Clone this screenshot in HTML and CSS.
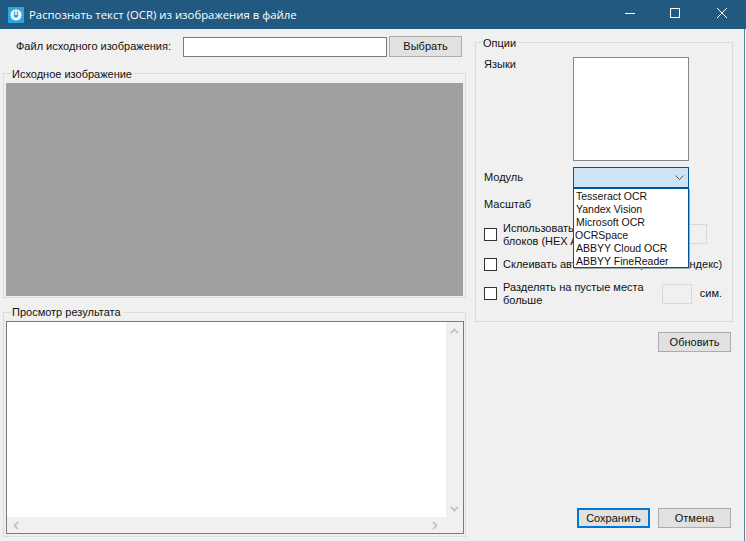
FILE: index.html
```html
<!DOCTYPE html>
<html lang="ru">
<head>
<meta charset="utf-8">
<title>Распознать текст (OCR) из изображения в файле</title>
<link rel="stylesheet" href="styles.css">
</head>
<body>
<div class="window">
  <header class="titlebar">
    <svg class="app-icon" width="16" height="16" viewBox="0 0 16 16">
      <rect width="16" height="16" fill="#2ba6df"/>
      <path d="M8 1.800l1.200 1.500 1.900-.6.500 1.800 1.800.5-.6 1.900L14.200 8l-1.400 1.100.6 1.900-1.800.5-.5 1.800-1.900-.6L8 14.200l-1.200-1.500-1.900.6-.5-1.800-1.800-.5.6-1.900L1.800 8l1.400-1.100-.6-1.900 1.800-.5.5-1.800 1.900.6z" fill="#fff"/>
      <circle cx="8" cy="8.400" r="3.300" fill="#2ba6df"/>
      <path d="M8 4v4.500" stroke="#2ba6df" stroke-width="3.400"/>
      <path d="M5.900 6a3.100 3.100 0 1 0 4.200 0" fill="none" stroke="#fff" stroke-width="1.300"/>
      <path d="M8 3.500v4.500" stroke="#fff" stroke-width="1.500"/>
    </svg>
    <span class="title">Распознать текст (OCR) из изображения в файле</span>
    <div class="win-controls">
      <svg class="win-btn" width="46" height="29" viewBox="0 0 46 29"><path d="M18 13.500h10" stroke="#fff"/></svg>
      <svg class="win-btn" width="46" height="29" viewBox="0 0 46 29"><rect x="17.500" y="8.500" width="9" height="9" fill="none" stroke="#fff"/></svg>
      <svg class="win-btn" width="46" height="29" viewBox="0 0 46 29"><path d="M18 8l10 10M28 8l-10 10" stroke="#fff"/></svg>
    </div>
  </header>
  <main class="content">
    <section class="left">
      <div class="file-row">
        <label class="file-label">Файл исходного изображения:</label>
        <div class="input file-input"></div>
        <button class="btn browse">Выбрать</button>
      </div>
      <div class="group source">
        <span class="legend">Исходное изображение</span>
        <div class="image-area"></div>
      </div>
      <div class="group preview">
        <span class="legend">Просмотр результата</span>
        <div class="result-box">
          <div class="result-main">
            <div class="result-text"></div>
            <div class="vscroll">
              <svg width="9" height="6" viewBox="0 0 9 6"><path d="M1 5l3.500-3.500L8 5" fill="none" stroke="#bdbdbd" stroke-width="1.600"/></svg>
              <svg width="9" height="6" viewBox="0 0 9 6"><path d="M1 1l3.500 3.500L8 1" fill="none" stroke="#bdbdbd" stroke-width="1.600"/></svg>
            </div>
          </div>
          <div class="hscroll">
            <svg width="6" height="9" viewBox="0 0 6 9"><path d="M5 1L1.500 4.500 5 8" fill="none" stroke="#bdbdbd" stroke-width="1.600"/></svg>
            <svg width="6" height="9" viewBox="0 0 6 9"><path d="M1 1l3.500 3.500L1 8" fill="none" stroke="#bdbdbd" stroke-width="1.600"/></svg>
          </div>
        </div>
      </div>
    </section>
    <section class="right">
      <div class="group options">
        <span class="legend">Опции</span>
        <div class="opt-row langs">
          <span class="opt-label">Языки</span>
          <div class="listbox"></div>
        </div>
        <div class="opt-row module">
          <span class="opt-label">Модуль</span>
          <div class="combo">
            <svg width="9" height="6" viewBox="0 0 9 6"><path d="M.5.500l4 4 4-4" fill="none" stroke="#555" stroke-width="1"/></svg>
            <ul class="dropdown">
              <li>Tesseract OCR</li>
              <li>Yandex Vision</li>
              <li>Microsoft OCR</li>
              <li class="nudge">OCRSpace</li>
              <li>ABBYY Cloud OCR</li>
              <li>ABBYY FineReader</li>
            </ul>
          </div>
        </div>
        <div class="opt-row scale">
          <span class="opt-label">Масштаб</span>
        </div>
        <div class="check-row first">
          <span class="checkbox"></span>
          <span class="check-text">Использовать цвет фона<br>блоков (HEX ARGB)</span>
          <div class="input disabled hex"></div>
        </div>
        <div class="check-row second">
          <span class="checkbox"></span>
          <span class="check-text">Склеивать автоматически (нижний индекс)</span>
        </div>
        <div class="check-row third">
          <span class="checkbox"></span>
          <span class="check-text">Разделять на пустые места<br>больше</span>
          <div class="input disabled spaces"></div>
          <span class="unit">сим.</span>
        </div>
      </div>
      <div class="update-row"><button class="btn">Обновить</button></div>
      <div class="footer-row">
        <button class="btn primary">Сохранить</button>
        <button class="btn">Отмена</button>
      </div>
    </section>
  </main>
</div>
</body>
</html>
```
FILE: styles.css
```css
* { box-sizing: border-box; }
html, body { margin: 0; height: 100%; }
body { background: #f0f0f0; font: 11px/13px "Liberation Sans", Arial, sans-serif; color: #111; overflow: hidden; }
.window { width: 746px; height: 541px; display: flex; flex-direction: column; }
.titlebar { height: 29px; flex: none; background: #215980; color: #fff; display: flex; align-items: center; padding-left: 8px; }
.app-icon { flex: none; }
.title { margin-left: 5px; font: 11.350px "Open Sans", sans-serif; }
.win-controls { margin-left: auto; display: flex; margin-right: 1px; }
.win-btn { display: block; }
.content { flex: 1; display: flex; min-height: 0; margin-right: 1px; border-right: 1px solid #5f86a3; }
.left { width: 475px; flex: none; padding-left: 3px; }
.file-row { display: flex; align-items: center; height: 21px; margin-top: 7px; padding-left: 13px; }
.file-label { width: 167px; white-space: nowrap; }
.input { background: #fff; border: 1px solid #7a7a7a; height: 20px; }
.file-input { width: 204px; }
.btn { font: inherit; color: #111; width: 73px; height: 20px; background: #e1e1e1; border: 1px solid #adadad; padding: 0; display: block; }
.browse { margin-left: 2px; height: 21px; }
.group { border: 1px solid #dcdcdc; position: relative; }
.legend { position: absolute; left: 7px; top: -6px; background: #f0f0f0; padding: 0 2px 0 1px; white-space: nowrap; }
.source { margin-top: 16px; height: 225px; width: 463px; padding: 9px 0 0 2px; }
.image-area { background: #a0a0a0; width: 457px; height: 213px; }
.preview { margin-top: 14px; width: 463px; height: 225px; padding: 8px 0 0 2px; }
.preview .legend { top: -7px; }
.result-box { width: 458px; height: 213px; border: 1px solid #7a7a7a; background: #fff; display: flex; flex-direction: column; }
.result-main { flex: 1; display: flex; min-height: 0; }
.result-text { flex: 1; }
.vscroll { width: 17px; background: #f0f0f0; display: flex; flex-direction: column; justify-content: space-between; align-items: center; padding: 6px 0 5px; }
.hscroll { height: 16px; background: #f0f0f0; display: flex; justify-content: space-between; align-items: center; padding: 0 25px 0 6px; }
.right { flex: 1; min-width: 0; display: flex; flex-direction: column; }
.options { margin-top: 13px; width: 258px; height: 280px; padding: 15px 0 0 8px; }
.options .legend { left: 6px; }
.opt-row { display: flex; }
.opt-label { width: 89px; flex: none; }
.listbox { width: 116px; height: 104px; background: #fff; border: 1px solid #828790; margin-top: -1px; }
.module { margin-top: 6px; align-items: center; }
.combo { position: relative; width: 116px; height: 21px; background: #cce4f7; border: 1px solid #005499; display: flex; align-items: center; justify-content: flex-end; padding-right: 4px; }
.dropdown { position: absolute; z-index: 2; left: -1px; top: 20px; width: 116px; height: 80px; margin: 0; padding: 1px 0 0 2px; list-style: none; background: #fff; border: 1px solid #005499; box-shadow: 1px 1px 0 #9aa; font-size: 10.500px; }
.dropdown li { height: 13px; white-space: nowrap; }
.dropdown .nudge { margin-left: -1px; }
.scale { margin-top: 10px; }
.check-row { display: flex; align-items: center; position: relative; }
.checkbox { width: 13px; height: 13px; flex: none; background: #fff; border: 1px solid #333; margin-right: 6px; }
.check-text { white-space: nowrap; }
.first .check-text, .third .check-text { padding-top: 2px; }
.first { margin-top: 10px; height: 26px; }
.hex { position: absolute; left: 132px; top: 3px; width: 91px; height: 20px; }
.second { margin-top: 4px; height: 26px; }
.third { margin-top: 3px; height: 26px; }
.disabled { background: #f0f0f0; border-color: #d9d9d9; }
.spaces { width: 30px; margin-left: auto; margin-top: 2px; }
.unit { margin-left: 8px; margin-right: 10px; }
.update-row { display: flex; justify-content: flex-end; margin-top: 10px; padding-right: 13px; }
.footer-row { display: flex; justify-content: flex-end; gap: 8px; margin-top: 156px; padding-right: 13px; }
.primary { border: 2px solid #0078d7; }
```
